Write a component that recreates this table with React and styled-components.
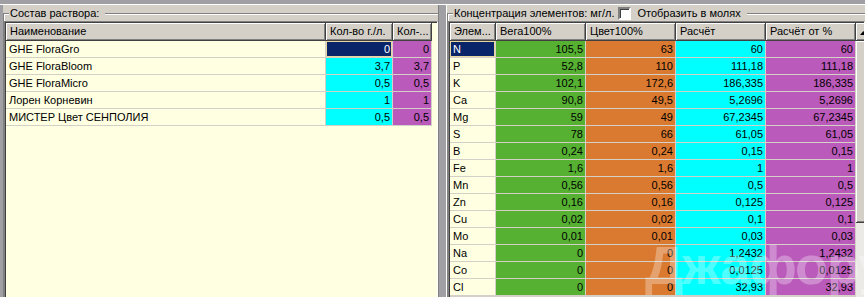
import React from "react";
import styled, { createGlobalStyle } from "styled-components";

/* 데이터 */
const mixRows = [
  { name: "GHE FloraGro", qty: "0", part: "0", selected: true },
  { name: "GHE FloraBloom", qty: "3,7", part: "3,7" },
  { name: "GHE FloraMicro", qty: "0,5", part: "0,5" },
  { name: "Лорен Корневин", qty: "1", part: "1" },
  { name: "МИСТЕР Цвет СЕНПОЛИЯ", qty: "0,5", part: "0,5" },
];

const elementRows = [
  ["N", "105,5", "63", "60", "60"],
  ["P", "52,8", "110", "111,18", "111,18"],
  ["K", "102,1", "172,6", "186,335", "186,335"],
  ["Ca", "90,8", "49,5", "5,2696", "5,2696"],
  ["Mg", "59", "49", "67,2345", "67,2345"],
  ["S", "78", "66", "61,05", "61,05"],
  ["B", "0,24", "0,24", "0,15", "0,15"],
  ["Fe", "1,6", "1,6", "1", "1"],
  ["Mn", "0,56", "0,56", "0,5", "0,5"],
  ["Zn", "0,16", "0,16", "0,125", "0,125"],
  ["Cu", "0,02", "0,02", "0,1", "0,1"],
  ["Mo", "0,01", "0,01", "0,03", "0,03"],
  ["Na", "0", "0", "1,2432", "1,2432"],
  ["Co", "0", "0", "0,0125", "0,0125"],
  ["Cl", "0", "0", "32,93", "32,93"],
];

const colors = {
  face: "#d4d0c8",
  cream: "#ffffe1",
  cyan: "#00ffff",
  purple: "#ba5aba",
  green: "#56b132",
  orange: "#da7a30",
  navy: "#0a246a",
  strip: "#a0a0a4",
};

const elementColors = [colors.cream, colors.green, colors.orange, colors.cyan, colors.purple];

/* 스타일 */
const GlobalStyle = createGlobalStyle`
  body {
    margin: 0;
    background: ${colors.face};
    font-family: "Liberation Sans", Arial, sans-serif;
    font-size: 11px;
    color: #000;
  }
`;

function App() {
  return (
    <>
      <GlobalStyle />
      <Window>
        <TopStrip />
        <Body>
          <SideStrip />
          <LeftPane>
            <GroupFrame>
              <Legend>Состав раствора:</Legend>
              <GridBox $fill={colors.cream}>
                <Grid $cols="320px 67px 39px">
                  <HeadCell>Наименование</HeadCell>
                  <HeadCell>Кол-во г./л.</HeadCell>
                  <HeadCell>Кол-...</HeadCell>
                  {mixRows.map((row) => (
                    <React.Fragment key={row.name}>
                      <Cell $bg={colors.cream}>{row.name}</Cell>
                      <Cell $bg={colors.cyan} $right $selected={row.selected}>
                        {row.qty}
                      </Cell>
                      <Cell $bg={colors.purple} $right>
                        {row.part}
                      </Cell>
                    </React.Fragment>
                  ))}
                </Grid>
              </GridBox>
            </GroupFrame>
          </LeftPane>
          <Splitter />
          <RightPane>
            <GroupFrame>
              <Legend>
                Концентрация элементов: мг/л.
                <CheckBox />
                Отобразить в молях
              </Legend>
              <GridBox>
                <Grid $cols="46px 90px 90px 90px 90px">
                  <HeadCell>Элем...</HeadCell>
                  <HeadCell>Вега100%</HeadCell>
                  <HeadCell>Цвет100%</HeadCell>
                  <HeadCell>Расчёт</HeadCell>
                  <HeadCell>Расчёт от %</HeadCell>
                  {elementRows.map((row) =>
                    row.map((value, i) => (
                      <Cell
                        key={row[0] + i}
                        $bg={elementColors[i]}
                        $right={i > 0}
                        $selected={row[0] === "N" && i === 0}
                      >
                        {value}
                      </Cell>
                    ))
                  )}
                </Grid>
                <ScrollBar>
                  <ScrollButton>
                    <svg width="7" height="4" viewBox="0 0 7 4">
                      <path d="M3.5 0 L7 4 L0 4 Z" fill="#000" />
                    </svg>
                  </ScrollButton>
                  <ScrollThumb />
                  <ScrollTrack />
                </ScrollBar>
              </GridBox>
            </GroupFrame>
          </RightPane>
        </Body>
        <Watermark>Джафорум</Watermark>
      </Window>
    </>
  );
}

const Window = styled.div`
  position: relative;
  width: 865px;
  height: 297px;
  overflow: hidden;
  background: ${colors.face};
  display: flex;
  flex-direction: column;
`;

const TopStrip = styled.div`
  height: 4px;
  flex: none;
  background: ${colors.strip};
  border-bottom: 1px solid #fff;
`;

const Body = styled.div`
  flex: 1;
  display: flex;
  min-height: 0;
`;

const SideStrip = styled.div`
  width: 3px;
  flex: none;
  background: ${colors.strip};
`;

const LeftPane = styled.div`
  width: 435px;
  flex: none;
  display: flex;
`;

const Splitter = styled.div`
  width: 7px;
  flex: none;
  background: ${colors.strip};
  border-left: 1px solid #808080;
`;

const RightPane = styled.div`
  flex: 1;
  display: flex;
  min-width: 0;
  border-left: 1px solid #fff;
`;

const GroupFrame = styled.div`
  position: relative;
  flex: 1;
  display: flex;
  margin-top: 8px;
  margin-bottom: -40px;
  padding: 7px 0 0 0;
  border: 1px solid #808080;
  border-right: none;
  box-shadow: inset 1px 1px #fff;
  min-width: 0;
`;

const Legend = styled.div`
  position: absolute;
  top: -7px;
  left: 5px;
  display: flex;
  align-items: center;
  height: 13px;
  padding: 0 6px 0 1px;
  background: ${colors.face};
  white-space: nowrap;
  line-height: 13px;
`;

const CheckBox = styled.span`
  display: inline-block;
  width: 9px;
  height: 9px;
  margin: 0 6px 0 4px;
  background: #fff;
  border: 2px solid;
  border-color: #808080 #fff #fff #808080;
  box-shadow: inset 1px 1px #404040;
`;

const GridBox = styled.div`
  flex: 1;
  display: flex;
  align-items: flex-start;
  min-width: 0;
  overflow: hidden;
  background: ${(p) => p.$fill || colors.face};
  border: 1px solid;
  border-color: #808080 #fff #fff #808080;
  box-shadow: inset 1px 1px #404040;
  padding: 1px 0 0 1px;
`;

const Grid = styled.div`
  display: grid;
  flex: none;
  grid-template-columns: ${(p) => p.$cols};
  grid-auto-rows: 17px;
  grid-template-rows: 18px;
`;

const HeadCell = styled.div`
  background: ${colors.face};
  border-right: 1px solid #404040;
  border-bottom: 1px solid #404040;
  box-shadow: inset 1px 1px #fff, inset -1px -1px #808080;
  padding: 0 4px;
  line-height: 17px;
  white-space: nowrap;
  overflow: hidden;
`;

const Cell = styled.div`
  background: ${(p) => (p.$selected ? colors.navy : p.$bg)};
  color: ${(p) => (p.$selected ? "#fff" : "#000")};
  box-shadow: ${(p) => (p.$selected ? "inset 0 0 0 1px #e8d8a0" : "none")};
  border-right: 1px solid ${colors.face};
  border-bottom: 1px solid ${colors.face};
  text-align: ${(p) => (p.$right ? "right" : "left")};
  padding: 0 2px 0 3px;
  line-height: 16px;
  white-space: nowrap;
  overflow: hidden;
`;

const ScrollBar = styled.div`
  width: 16px;
  flex: none;
  align-self: stretch;
  display: flex;
  flex-direction: column;
`;

const ScrollButton = styled.div`
  height: 18px;
  flex: none;
  display: flex;
  align-items: center;
  justify-content: center;
  background: ${colors.face};
  border-right: 1px solid #404040;
  border-bottom: 1px solid #404040;
  box-shadow: inset 1px 1px #fff, inset -1px -1px #808080;
  box-sizing: border-box;
  padding-top: 2px;
`;

const ScrollThumb = styled.div`
  height: 182px;
  flex: none;
  background: ${colors.face};
  border-right: 1px solid #404040;
  border-bottom: 1px solid #404040;
  box-shadow: inset 1px 1px #fff, inset -1px -1px #808080;
  box-sizing: border-box;
`;

const ScrollTrack = styled.div`
  flex: 1;
  background: #ebeae7;
`;

const Watermark = styled.div`
  position: absolute;
  left: 645px;
  top: 233px;
  font-family: "Liberation Sans", Arial, sans-serif;
  font-size: 54px;
  line-height: 64px;
  font-weight: bold;
  letter-spacing: -1px;
  color: rgba(255, 255, 255, 0.3);
  white-space: nowrap;
  pointer-events: none;
`;

export default App;
